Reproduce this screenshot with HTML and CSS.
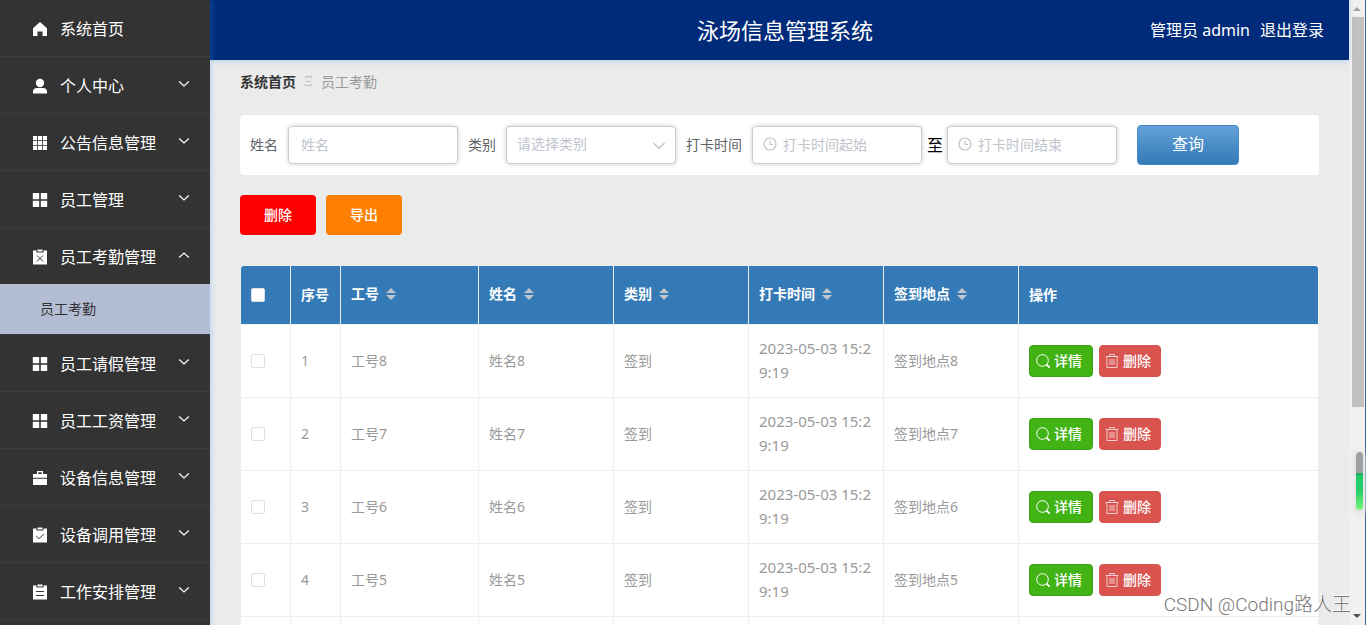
FILE: index.html
```html
<!DOCTYPE html>
<html lang="zh-CN">
<head>
<meta charset="utf-8">
<title>泳场信息管理系统</title>
<link rel="stylesheet" href="styles.css">
</head>
<body>
<svg class="defs" aria-hidden="true">
  <symbol id="home" viewBox="0 0 16 16"><path fill="currentColor" d="M8 1 15 7.2V15h-4.500v-4.600h-5V15H1V7.2z"/></symbol>
  <symbol id="user" viewBox="0 0 16 16"><circle cx="8" cy="5" r="4.2" fill="currentColor"/><path fill="currentColor" d="M1 15.500v-2C1 11.300 2.600 10 4.600 10h6.800c2 0 3.600 1.300 3.600 3.500v2z"/></symbol>
  <symbol id="grid9" viewBox="0 0 16 16"><path fill="currentColor" d="M1 1h4.200v4.200H1zM6 1h4v4.200H6zM10.800 1H15v4.200h-4.200zM1 6h4.200v4H1zM6 6h4v4H6zM10.800 6H15v4h-4.200zM1 10.800h4.200V15H1zM6 10.800h4V15H6zM10.800 10.800H15V15h-4.200z"/></symbol>
  <symbol id="grid4" viewBox="0 0 16 16"><path fill="currentColor" d="M.8 1h6.400v6.200H.8zM8.800 1h6.400v6.200H8.800zM.8 8.800h6.400V15H.8zM8.800 8.800h6.400V15H8.800z"/></symbol>
  <symbol id="board" viewBox="0 0 16 16"><path fill="currentColor" d="M1 1.500h3.500V3.500h7V1.500H15v14H1z"/><path fill="currentColor" d="M5.500 .5h5V2.500h-5z"/></symbol>
  <symbol id="case" viewBox="0 0 16 16"><path fill="currentColor" d="M1 8.800h14V15H1zM1 4h4V1h6v3h4v3.800H1zM6.300 4h3.400V2.300H6.300z" fill-rule="evenodd"/></symbol>
  <symbol id="down" viewBox="0 0 12 12"><path fill="none" stroke="currentColor" stroke-width="1.200" d="M1.200 3.500 6 8l4.800-4.500"/></symbol>
  <symbol id="up" viewBox="0 0 12 12"><path fill="none" stroke="currentColor" stroke-width="1.200" d="M1.200 8.500 6 4l4.800 4.500"/></symbol>
  <symbol id="clock" viewBox="0 0 14 14"><g fill="none" stroke="currentColor" stroke-width="1.200"><circle cx="7" cy="7" r="6"/><path d="M7 3.500v4h3"/></g></symbol>
  <symbol id="search" viewBox="0 0 14 14"><circle cx="6.500" cy="6.500" r="5.800" fill="none" stroke="currentColor"/><path stroke="currentColor" stroke-width="1.800" d="m10.300 10.300 3.400 3.400"/></symbol>
  <symbol id="trash" viewBox="0 0 14 14"><path fill="none" stroke="currentColor" d="M.5 2.500h13M4.500 2.500v-2h5v2M2 2.500v11h10v-11M5 5v6M7 5v6M9 5v6"/></symbol>
  <symbol id="sort" viewBox="0 0 10 12"><path fill="currentColor" d="M5 0l5 5H0zM5 12 0 7h10z"/></symbol>
</svg>
<div class="app">
  <nav class="sidebar">
    <a class="item" href="#"><svg class="icon"><use href="#home"/></svg><span>系统首页</span></a>
    <a class="item" href="#"><svg class="icon"><use href="#user"/></svg><span>个人中心</span><svg class="arrow"><use href="#down"/></svg></a>
    <a class="item" href="#"><svg class="icon"><use href="#grid9"/></svg><span>公告信息管理</span><svg class="arrow"><use href="#down"/></svg></a>
    <a class="item" href="#"><svg class="icon"><use href="#grid4"/></svg><span>员工管理</span><svg class="arrow"><use href="#down"/></svg></a>
    <div class="group">
      <a class="item" href="#"><svg class="icon" viewBox="0 0 16 16"><use href="#board"/><path class="ink" d="m5 6.500 6 6M11 6.500l-6 6"/></svg><span>员工考勤管理</span><svg class="arrow"><use href="#up"/></svg></a>
      <a class="subitem" href="#">员工考勤</a>
    </div>
    <a class="item" href="#"><svg class="icon"><use href="#grid4"/></svg><span>员工请假管理</span><svg class="arrow"><use href="#down"/></svg></a>
    <a class="item" href="#"><svg class="icon"><use href="#grid4"/></svg><span>员工工资管理</span><svg class="arrow"><use href="#down"/></svg></a>
    <a class="item" href="#"><svg class="icon"><use href="#case"/></svg><span>设备信息管理</span><svg class="arrow"><use href="#down"/></svg></a>
    <a class="item" href="#"><svg class="icon" viewBox="0 0 16 16"><use href="#board"/><path class="ink" d="m4.200 9 2.800 2.800L12 6.800"/></svg><span>设备调用管理</span><svg class="arrow"><use href="#down"/></svg></a>
    <a class="item" href="#"><svg class="icon" viewBox="0 0 16 16"><use href="#board"/><path class="ink" d="M4 7.500h8M4 11.500h8"/></svg><span>工作安排管理</span><svg class="arrow"><use href="#down"/></svg></a>
    <a class="item" href="#"></a>
  </nav>
  <div class="page">
    <header class="header">
      <h1>泳场信息管理系统</h1>
      <div class="account"><span>管理员 admin</span><a href="#">退出登录</a></div>
    </header>
    <main class="main">
      <div class="crumbs"><a href="#">系统首页</a><span class="sep">Ξ</span><span>员工考勤</span></div>
      <form class="filters">
        <label for="name">姓名</label>
        <input class="box" id="name" type="text" placeholder="姓名">
        <label for="kind">类别</label>
        <div class="field"><select class="box" id="kind"><option>请选择类别</option></select><svg class="caret"><use href="#down"/></svg></div>
        <label for="from">打卡时间</label>
        <div class="field"><svg class="clock"><use href="#clock"/></svg><input class="box dated" id="from" type="text" placeholder="打卡时间起始"></div>
        <label class="to" for="until">至</label>
        <div class="field"><svg class="clock"><use href="#clock"/></svg><input class="box dated" id="until" type="text" placeholder="打卡时间结束"></div>
        <button class="query" type="button">查询</button>
      </form>
      <div class="actions"><button class="remove" type="button">删除</button><button class="export" type="button">导出</button></div>
      <div class="tablewrap">
      <table>
        <colgroup><col class="c-s"><col class="c-s"><col class="c-no"><col class="c-m"><col class="c-m"><col class="c-m"><col class="c-m"><col></colgroup>
        <thead><tr>
          <th><input type="checkbox" aria-label="全选"></th><th>序号</th>
          <th class="sortable">工号<svg class="sort"><use href="#sort"/></svg></th>
          <th class="sortable">姓名<svg class="sort"><use href="#sort"/></svg></th>
          <th class="sortable">类别<svg class="sort"><use href="#sort"/></svg></th>
          <th class="sortable">打卡时间<svg class="sort"><use href="#sort"/></svg></th>
          <th class="sortable">签到地点<svg class="sort"><use href="#sort"/></svg></th>
          <th>操作</th>
        </tr></thead>
        <tbody>
          <tr><td><input type="checkbox" aria-label="选择 1"></td><td>1</td><td>工号8</td><td>姓名8</td><td>签到</td><td class="time">2023-05-03 15:29:19</td><td>签到地点8</td><td><div class="ops"><button class="detail" type="button"><svg><use href="#search"/></svg>详情</button><button class="del" type="button"><svg><use href="#trash"/></svg>删除</button></div></td></tr>
          <tr><td><input type="checkbox" aria-label="选择 2"></td><td>2</td><td>工号7</td><td>姓名7</td><td>签到</td><td class="time">2023-05-03 15:29:19</td><td>签到地点7</td><td><div class="ops"><button class="detail" type="button"><svg><use href="#search"/></svg>详情</button><button class="del" type="button"><svg><use href="#trash"/></svg>删除</button></div></td></tr>
          <tr><td><input type="checkbox" aria-label="选择 3"></td><td>3</td><td>工号6</td><td>姓名6</td><td>签到</td><td class="time">2023-05-03 15:29:19</td><td>签到地点6</td><td><div class="ops"><button class="detail" type="button"><svg><use href="#search"/></svg>详情</button><button class="del" type="button"><svg><use href="#trash"/></svg>删除</button></div></td></tr>
          <tr><td><input type="checkbox" aria-label="选择 4"></td><td>4</td><td>工号5</td><td>姓名5</td><td>签到</td><td class="time">2023-05-03 15:29:19</td><td>签到地点5</td><td><div class="ops"><button class="detail" type="button"><svg><use href="#search"/></svg>详情</button><button class="del" type="button"><svg><use href="#trash"/></svg>删除</button></div></td></tr>
          <tr><td></td><td></td><td></td><td></td><td></td><td></td><td></td><td></td></tr>
        </tbody>
      </table>
      </div>
    </main>
  </div>
  <div class="scroll" aria-hidden="true">
    <svg viewBox="0 0 8 4"><path fill="#a3a3a3" d="M4 0l4 4H0z"/></svg>
    <div class="rail"><div class="thumb"></div></div>
    <svg viewBox="0 0 8 4"><path fill="#505050" d="M0 0h8L4 4z"/></svg>
  </div>
  <div class="meter" aria-hidden="true"></div>
  <div class="mark">CSDN @Coding路人王</div>
</div>
</body>
</html>
```
FILE: styles.css
```css
* { box-sizing: border-box; }
body {
  margin: 0;
  font: 14px/24px "Noto Sans", "Noto Sans CJK SC", sans-serif;
  color: #999;
  background: #ebebeb;
}
a { color: inherit; text-decoration: none; }
button, input, select { font: inherit; margin: 0; }
svg { flex: none; display: block; }
.defs { display: none; }
.app { position: relative; display: flex; height: 100vh; overflow: hidden; }

.sidebar {
  position: relative;
  z-index: 2;
  flex: none;
  width: 210px;
  background: #333;
  box-shadow: 1px 0 6px rgba(64, 158, 255, 0.3);
}
.item {
  display: flex;
  align-items: center;
  gap: 12px;
  height: 57px;
  padding: 2px 20px 0 32px;
  border-bottom: 1px solid #3d3d3d;
  font-size: 16px;
  color: #fff;
}
.icon { width: 16px; height: 16px; }
.ink { fill: none; stroke: #333; }
.arrow { width: 12px; height: 12px; margin: 0 0 4px auto; }
.group { border-bottom: 1px solid #3d3d3d; }
.group .item { height: 56px; border-bottom: 0; }
.subitem {
  display: block;
  padding-left: 40px;
  line-height: 50px;
  color: #333;
  background: #b3bed4;
}

.page { flex: 1; min-width: 0; }
.header {
  position: relative;
  z-index: 1;
  display: grid;
  grid-template-columns: 1fr auto 1fr;
  align-items: center;
  height: 60px;
  padding: 0 25px 0 36px;
  background: #002b7a;
  box-shadow: 0 1px 6px rgba(64, 158, 255, 0.3);
  color: #fff;
}
.header h1 { grid-column: 2; margin: 0; font-size: 22px; font-weight: 400; }
.account { display: flex; justify-content: flex-end; gap: 10px; font-size: 16px; white-space: nowrap; }

.main { padding: 0 30px; }
.crumbs { display: flex; gap: 8px; height: 45px; padding-top: 10px; border-bottom: 1px solid #eee; }
.crumbs a { font-weight: 700; color: #333; }
.sep { color: #c0c4cc; font-family: "Liberation Serif", serif; }

.filters {
  display: flex;
  align-items: center;
  gap: 10px;
  height: 60px;
  margin: 10px 0 20px;
  padding: 0 10px;
  border-radius: 4px;
  background: #fff;
  color: #606266;
  white-space: nowrap;
}
.field { position: relative; }
.box {
  display: block;
  appearance: none;
  width: 170px;
  height: 38px;
  padding: 0 12px 2px;
  border: 1px solid #ccc;
  border-radius: 4px;
  outline: 0;
  background: #fff;
  box-shadow: 0 0 4px #ccc;
  color: #c0c4cc;
}
select.box { padding: 0 10px 2px; }
.box::placeholder { color: #c0c4cc; opacity: 1; }
.box.dated { padding-left: 30px; }
.caret { position: absolute; right: 10px; top: 13px; width: 14px; height: 14px; color: #c0c4cc; }
.clock { position: absolute; left: 11px; top: 11px; width: 14px; height: 14px; color: #c0c4cc; }
.to { margin: 0 -6px 0 -5px; font-size: 16px; color: #000; }
.query {
  width: 102px;
  height: 40px;
  margin-left: 10px;
  padding: 0 0 2px;
  border: 1px solid #4088c6;
  border-radius: 4px;
  background: linear-gradient(#64a1d8, #337ab7);
  font-size: 16px;
  color: #fff;
}

.actions { display: flex; gap: 10px; margin-bottom: 30px; }
.actions button { width: 76px; height: 40px; border: 0; border-radius: 4px; color: #fff; font-weight: 500; }
.remove { background: #f00; }
.export { background: #ff8000; }

.tablewrap { border: 1px solid #eee; border-radius: 4px; overflow: hidden; background: #fff; }
table { width: 100%; table-layout: fixed; border-collapse: separate; border-spacing: 0; }
.c-s { width: 50px; }
.c-no { width: 138px; }
.c-m { width: 135px; }
th, td { padding: 0 10px; border-right: 1px solid #eee; border-bottom: 1px solid #eee; text-align: left; }
th:last-child, td:last-child { border-right: 0; }
th { height: 59px; background: #337ab7; color: #fff; white-space: nowrap; }
th.sortable { padding-bottom: 2px; }
td { height: 73px; }
td.time { padding-bottom: 2px; font-size: 15px; word-break: break-all; }
.sort { display: inline-block; width: 10px; height: 12px; margin-left: 7px; vertical-align: -1px; color: #c0c4cc; }
input[type="checkbox"] {
  display: block;
  appearance: none;
  width: 14px;
  height: 14px;
  border: 1px solid #dcdfe6;
  border-radius: 2px;
  background: #fff;
}
.ops { display: flex; gap: 6px; }
.ops button {
  display: flex;
  align-items: center;
  gap: 4px;
  width: 64px;
  height: 32px;
  padding: 0 6px;
  border: 1px solid #3ba312;
  border-radius: 4px;
  background: #41b314;
  color: #fff;
  font-weight: 500;
}
.ops svg { width: 14px; height: 14px; }
.ops .del { width: 62px; padding: 0 5px; border-color: #d9534f; background: #d9534f; }
.ops .del svg { opacity: 0.7; }

.scroll {
  flex: none;
  display: flex;
  flex-direction: column;
  align-items: center;
  width: 17px;
  padding: 7px 0;
  border-right: 1px solid #3c6491;
  background: #f1f1f1;
}
.scroll svg { width: 8px; height: 4px; }
.rail { flex: 1; width: 13px; padding: 6px 0; }
.thumb { height: 66%; margin-left: 1px; background: #c1c1c1; }
.meter {
  position: absolute;
  z-index: 3;
  right: 3px;
  top: 452px;
  width: 7px;
  height: 58px;
  border-radius: 4px;
  background: linear-gradient(#a0a0a0 0 21px, #17b65c 21px 24px, #23cc6b 24px 38px, #7af57a);
  box-shadow: 0 2px 6px 3px #e2e2e2;
}
.mark {
  position: absolute;
  z-index: 4;
  right: 15px;
  bottom: 8px;
  font-family: Roboto, "Noto Sans CJK SC", sans-serif;
  font-size: 19px;
  font-weight: 300;
  color: #777;
  text-shadow: -1px -1px 0 #fff;
}
```
